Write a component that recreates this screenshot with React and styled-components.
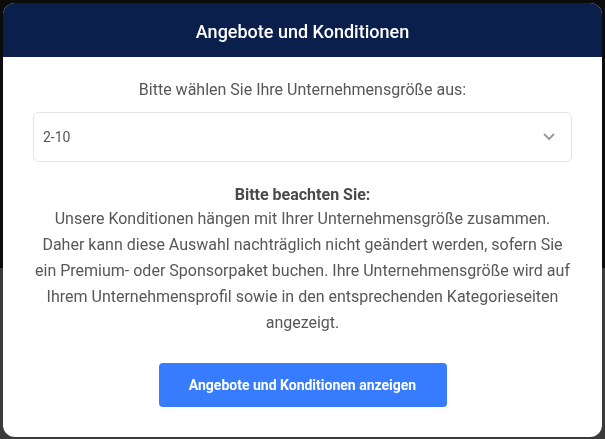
import React, { useState } from "react";
import styled, { createGlobalStyle } from "styled-components";

const GlobalStyle = createGlobalStyle`
  * { box-sizing: border-box; }
  html, body {
    margin: 0;
    padding: 0;
    height: 100%;
    font-family: Roboto, "Liberation Sans", Arial, sans-serif;
    background: linear-gradient(#0c0c0c 0, #0c0c0c 268px, #3a3a3a 268px, #3a3a3a 100%);
  }
`;

const Overlay = styled.div`
  position: fixed;
  inset: 0;
  display: flex;
  align-items: flex-start;
  justify-content: center;
  padding: 3px;
`;

const Modal = styled.div`
  width: 599px;
  background: #fff;
  border-radius: 12px;
  overflow: hidden;
  display: flex;
  flex-direction: column;
`;

const Header = styled.div`
  height: 54px;
  background: #0a1f4c;
  color: #fff;
  display: flex;
  align-items: center;
  justify-content: center;
  padding-top: 2px;
  font-size: 18px;
  font-weight: 500;
`;

const Body = styled.div`
  padding: 20px 30px 30px;
  display: flex;
  flex-direction: column;
  align-items: center;
  color: #575757;
  font-size: 16px;
  line-height: 26px;
  text-align: center;
`;

const Label = styled.div`
  margin-bottom: 9px;
`;

const SelectBox = styled.div`
  width: 100%;
  height: 50px;
  border: 1px solid #e4e4e4;
  border-radius: 6px;
  display: flex;
  align-items: center;
  justify-content: space-between;
  padding: 0 16px 0 9px;
  font-size: 14px;
  color: #555;
  cursor: pointer;
`;

const Notice = styled.div`
  margin-top: 22px;
  strong {
    display: block;
    font-weight: 700;
    color: #4a4a4a;
    line-height: 22px;
  }
`;

const Button = styled.button`
  margin-top: 27px;
  width: 288px;
  height: 44px;
  border: none;
  border-radius: 4px;
  background: #377cff;
  color: #fff;
  font-family: inherit;
  font-size: 14px;
  font-weight: 700;
  cursor: pointer;
`;

function Chevron() {
  return (
    <svg width="12" height="8" viewBox="0 0 12 8">
      <path d="M1.5 1.5 L6 6 L10.5 1.5" fill="none" stroke="#9a9a9a" strokeWidth="1.8" strokeLinecap="round" strokeLinejoin="round" />
    </svg>
  );
}

export default function App() {
  const [size] = useState("2-10");

  return (
    <>
      <GlobalStyle />
      <Overlay>
        <Modal>
          <Header>Angebote und Konditionen</Header>
          <Body>
            <Label>Bitte wählen Sie Ihre Unternehmensgröße aus:</Label>
            <SelectBox>
              <span>{size}</span>
              <Chevron />
            </SelectBox>
            <Notice>
              <strong>Bitte beachten Sie:</strong>
              Unsere Konditionen hängen mit Ihrer Unternehmensgröße zusammen.
              Daher kann diese Auswahl nachträglich nicht geändert werden, sofern Sie
              ein Premium- oder Sponsorpaket buchen. Ihre Unternehmensgröße wird auf
              Ihrem Unternehmensprofil sowie in den entsprechenden Kategorieseiten
              angezeigt.
            </Notice>
            <Button>Angebote und Konditionen anzeigen</Button>
          </Body>
        </Modal>
      </Overlay>
    </>
  );
}
